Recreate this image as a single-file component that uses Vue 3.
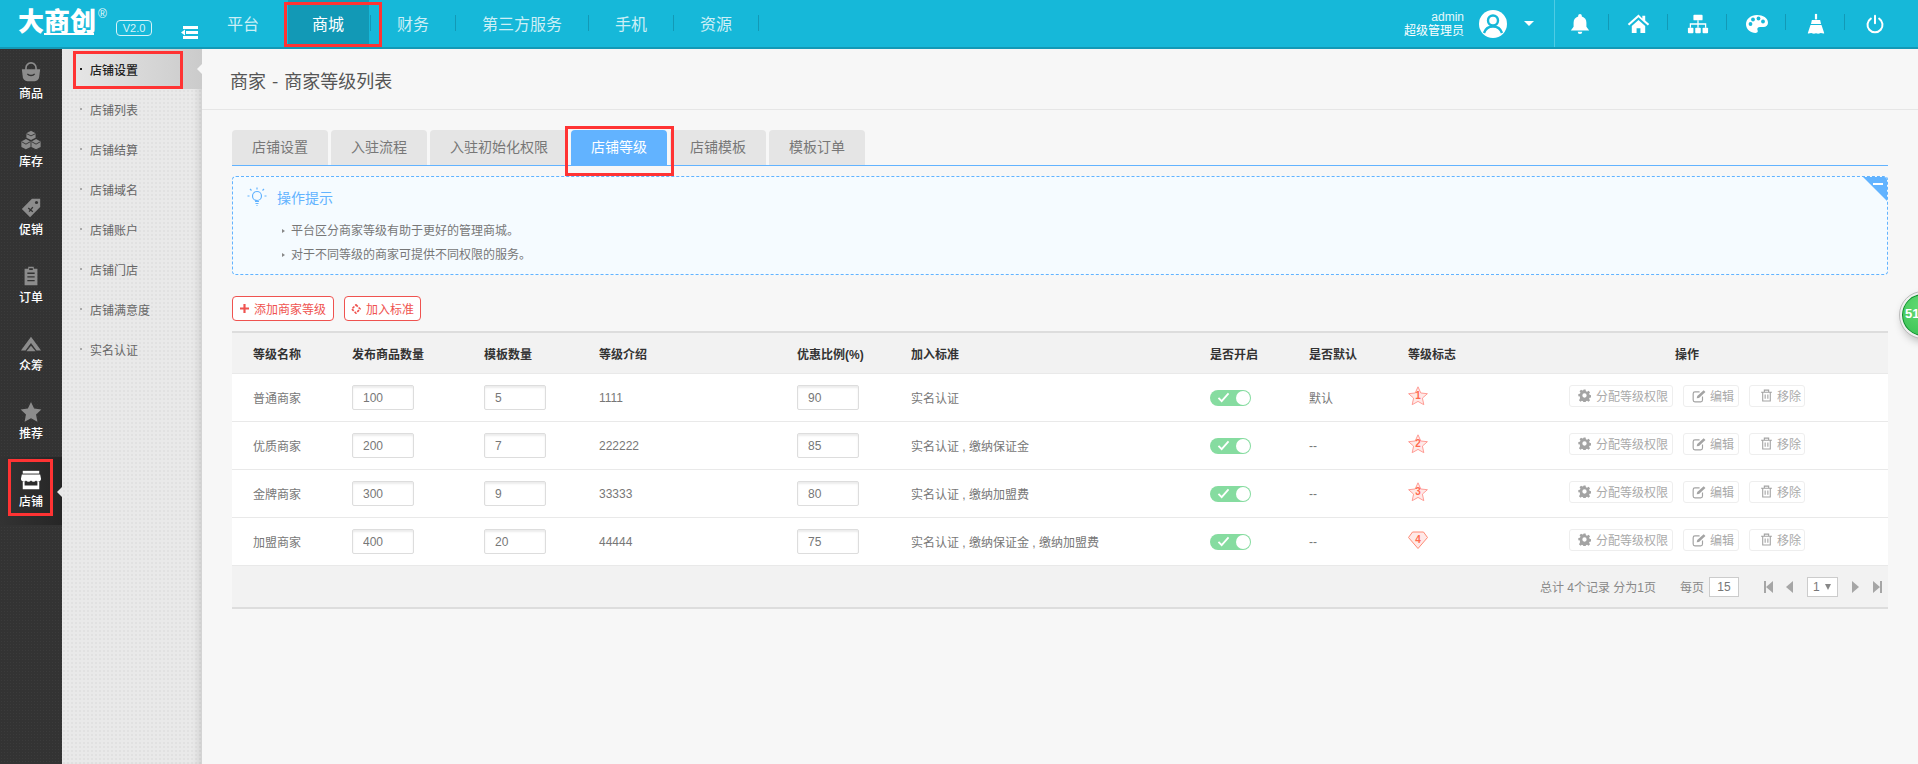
<template>
  <div class="page">
    <!-- Top bar -->
    <header class="topbar">
      <div class="logo">
        <span class="logo-text">大商创</span>
        <span class="logo-line"></span>
        <span class="logo-reg">®</span>
        <span class="logo-ver">V2.0</span>
        <svg class="menu-toggle" viewBox="0 0 17 13" width="17" height="13">
          <path d="M0 6.5 4 3.5v6z" fill="#fff" />
          <path d="M2 0h15v3H2zM5 5h12v3H5zM2 10h15v3H2z" fill="#fff" />
        </svg>
      </div>
      <nav class="topnav">
        <a v-for="item in topNav" :key="item" class="topnav-item" :class="{ active: item === '商城' }">{{ item }}</a>
      </nav>
      <div class="topbar-right">
        <div class="user">
          <div class="user-name">admin</div>
          <div class="user-role">超级管理员</div>
        </div>
        <svg class="avatar" viewBox="0 0 28 28" width="28" height="28">
          <circle cx="14" cy="14" r="14" fill="#fff" />
          <circle cx="14" cy="10.5" r="5" fill="none" stroke="#16b8d9" stroke-width="2.4" />
          <path d="M5 23c1.5-4.5 5-6.5 9-6.5s7.5 2 9 6.5" fill="none" stroke="#16b8d9" stroke-width="2.4" />
        </svg>
        <span class="caret"></span>
        <div class="tools">
          <div class="tool first">
            <svg viewBox="0 0 24 24" width="22" height="22" fill="#fff">
              <path d="M12 1a2 2 0 0 1 2 2v.8A7 7 0 0 1 19 10.5V15l3 4H2l3-4v-4.5a7 7 0 0 1 5-6.7V3a2 2 0 0 1 2-2z" />
              <path d="M9.5 20.5h5a2.5 2.5 0 0 1-5 0z" />
            </svg>
          </div>
          <div class="tool">
            <svg viewBox="0 0 24 24" width="23" height="23" fill="#fff">
              <path d="M12 2.5 .8 12.5l1.500 1.700L12 5.600l9.700 8.600 1.500-1.700-4.200-3.700V4h-3v2.900z" />
              <path d="M5 14.500 12 8.300l7 6.200V22h-5v-5h-4v5H5z" />
            </svg>
          </div>
          <div class="tool">
            <svg viewBox="0 0 24 24" width="22" height="22" fill="#fff">
              <rect x="7" y="2" width="10" height="6" rx="1" />
              <rect x="1" y="16" width="6" height="6" rx="1" />
              <rect x="9" y="16" width="6" height="6" rx="1" />
              <rect x="17" y="16" width="6" height="6" rx="1" />
              <path d="M11.3 8h1.400v3.300H21V16h-1.400v-3.300h-6.900V16h-1.400v-3.300H4.400V16H3v-4.700h8.300z" />
            </svg>
          </div>
          <div class="tool">
            <svg viewBox="0 0 24 24" width="24" height="24">
              <path d="M12 3C5.800 3 1 7 1 12.300 1 17.500 5.500 21 10.500 21c2.500 0 2.500-1.700 2-2.900-.7-1.600.3-3.100 2.500-3.100h3.500c2.700 0 4.500-1.800 4.500-4.300C23 6 18 3 12 3z" fill="#fff" />
              <circle cx="5.500" cy="12" r="1.900" fill="#16b8d9" />
              <circle cx="8" cy="7.500" r="1.900" fill="#16b8d9" />
              <circle cx="13.500" cy="6.500" r="1.900" fill="#16b8d9" />
              <circle cx="18" cy="9.500" r="1.900" fill="#16b8d9" />
            </svg>
          </div>
          <div class="tool">
            <svg viewBox="0 0 24 24" width="22" height="22" fill="#fff">
              <path d="M10.800 1h2.400v6h-2.400z" />
              <path d="M7.500 7.500h9l1 4.500h-11z" />
              <path d="M6 13h12l3 9c-1.500.8-3-.6-4.500 0-1.500.7-3 .7-4.500 0-1.500.7-3 .7-4.500 0-1.500-.6-3 .8-4.500 0z" />
            </svg>
          </div>
          <div class="tool last">
            <svg viewBox="0 0 24 24" width="20" height="20" fill="none" stroke="#fff" stroke-width="2.4" stroke-linecap="round">
              <path d="M7 5.500a9 9 0 1 0 10 0" />
              <path d="M12 2v9" />
            </svg>
          </div>
        </div>
      </div>
    </header>

    <div class="layout">
      <!-- Main module bar -->
      <aside class="sidebar">
        <div v-for="item in sideNav" :key="item.name" class="side-item" :class="{ active: item.name === '店铺' }">
          <svg class="side-icon" viewBox="0 0 24 24" width="22" height="22" v-html="item.icon"></svg>
          <span>{{ item.name }}</span>
        </div>
      </aside>

      <!-- Sub menu -->
      <aside class="submenu">
        <div v-for="(item, i) in subNav" :key="item" class="sub-item" :class="{ active: i === 0 }">
          <i class="sub-dot"></i>{{ item }}
        </div>
      </aside>

      <!-- Content -->
      <main class="content">
        <div class="page-title">商家 - 商家等级列表</div>
        <div class="content-body">
          <div class="tabs">
            <div v-for="tab in tabs" :key="tab" class="tab" :class="{ active: tab === '店铺等级' }">{{ tab }}</div>
          </div>

          <div class="tips">
            <div class="tips-head">
              <svg viewBox="0 0 20 20" width="20" height="20" fill="none" stroke="#62b3ff" stroke-width="1.2">
                <circle cx="10" cy="9" r="4.500" />
                <path d="M8 14.500h4M8.500 16.500h3M9.500 18.500h1M10 .5v2M2.500 9h-2M19.500 9h-2M4.500 3.500 3 2M15.500 3.500 17 2" />
              </svg>
              <span>操作提示</span>
            </div>
            <ul class="tips-list">
              <li>平台区分商家等级有助于更好的管理商城。</li>
              <li>对于不同等级的商家可提供不同权限的服务。</li>
            </ul>
            <div class="tips-corner"><i></i></div>
          </div>

          <div class="toolbar">
            <button class="red-btn">
              <svg viewBox="0 0 10 10" width="9" height="9" fill="#ef5350"><path d="M3.800 0h2.400v3.800H10v2.400H6.200V10H3.800V6.200H0V3.800h3.800z" /></svg>
              添加商家等级
            </button>
            <button class="red-btn second">
              <svg viewBox="0 0 12 12" width="10" height="10" fill="none" stroke="#ef5350" stroke-width="2"><path d="M6 1 11 6 6 11 1 6z" stroke-dasharray="3 1.500" /></svg>
              加入标准
            </button>
          </div>

          <table class="grade-table">
            <colgroup>
              <col v-for="w in colWidths" :key="w.id" :style="{ width: w.px + 'px' }" />
            </colgroup>
            <thead>
              <tr>
                <th class="first">等级名称</th>
                <th>发布商品数量</th>
                <th>模板数量</th>
                <th>等级介绍</th>
                <th>优惠比例(%)</th>
                <th>加入标准</th>
                <th>是否开启</th>
                <th>是否默认</th>
                <th>等级标志</th>
                <th class="center">操作</th>
              </tr>
            </thead>
            <tbody>
              <tr v-for="row in grades" :key="row.name">
                <td class="first">{{ row.name }}</td>
                <td><input class="num" :value="row.goods" /></td>
                <td><input class="num" :value="row.tpl" /></td>
                <td>{{ row.intro }}</td>
                <td><input class="num" :value="row.rate" /></td>
                <td>{{ row.standard }}</td>
                <td>
                  <div class="switch">
                    <svg viewBox="0 0 14 12" width="13" height="11" fill="none" stroke="#fff" stroke-width="2"><path d="M1.500 6.500 5 10l7.500-8.500" /></svg>
                    <i></i>
                  </div>
                </td>
                <td>{{ row.isDefault }}</td>
                <td>
                  <svg class="badge" viewBox="0 0 20 20" width="20" height="20">
                    <path v-if="row.level < 4" d="M10 .8l2.800 6.200 6.600.7-5 4.400 1.400 6.600L10 15.400l-5.800 3.300 1.400-6.600-5-4.400 6.600-.7z" fill="#ffe9e7" stroke="#ff9d96" />
                    <path v-else d="M4.500 2h11l4 5.500L10 18.500.5 7.500z" fill="#ffe9e7" stroke="#ff8a75" />
                    <text x="10" y="13" text-anchor="middle" class="badge-num">{{ row.level }}</text>
                  </svg>
                </td>
                <td class="center">
                  <div class="actions">
                    <a class="act act-wide">
                      <svg viewBox="0 0 24 24" width="13" height="13"><path fill="#a3a3a3" fill-rule="evenodd" d="M10 1h4l.6 3 2.200.9 2.600-1.700 2.800 2.800-1.700 2.600.9 2.200 3 .6v4l-3 .6-.9 2.200 1.700 2.600-2.800 2.800-2.600-1.700-2.200.9-.6 3h-4l-.6-3-2.200-.9-2.600 1.700-2.800-2.800 1.700-2.600L3.600 14l-3-.6v-4l3-.6.9-2.200L2.800 4l2.800-2.800 2.600 1.700 2.200-.9zM12 8a4 4 0 1 0 0 8 4 4 0 0 0 0-8z" /></svg>
                      分配等级权限
                    </a>
                    <a class="act">
                      <svg viewBox="0 0 24 24" width="14" height="14" fill="none" stroke="#a3a3a3" stroke-width="2"><path d="M18 13v6a3 3 0 0 1-3 3H5a3 3 0 0 1-3-3V8a3 3 0 0 1 3-3h8" /><path d="M9 12 20 2l3 3-11 10.500-4 .5z" fill="#a3a3a3" stroke="none" /></svg>
                      编辑
                    </a>
                    <a class="act act-del">
                      <svg viewBox="0 0 24 24" width="13" height="13" fill="none" stroke="#a3a3a3" stroke-width="2"><path d="M2 6h20M8 6V2h8v4M5 6v16h14V6M9.500 10v8M14.500 10v8" /></svg>
                      移除
                    </a>
                  </div>
                </td>
              </tr>
            </tbody>
          </table>

          <div class="pager">
            <span class="pager-total">总计 4个记录 分为1页</span>
            <span class="pager-size">每页</span>
            <input class="pager-input" value="15" />
            <svg class="pager-first" viewBox="0 0 9 12" width="9" height="12" fill="#a6a6a6"><path d="M0 0h2v12H0zM9 0v12L2 6z" /></svg>
            <svg class="pager-prev" viewBox="0 0 7 12" width="7" height="12" fill="#a6a6a6"><path d="M7 0v12L0 6z" /></svg>
            <div class="pager-select">1<i></i></div>
            <svg class="pager-next" viewBox="0 0 7 12" width="7" height="12" fill="#a6a6a6"><path d="M0 0v12l7-6z" /></svg>
            <svg class="pager-last" viewBox="0 0 9 12" width="9" height="12" fill="#a6a6a6"><path d="M7 0h2v12H7zM0 0v12l7-6z" /></svg>
          </div>
        </div>
      </main>
    </div>

    <!-- Floating chat ball -->
    <div class="ball">51</div>

    <!-- Red review marks drawn over the page -->
    <div class="mark mark-nav"></div>
    <div class="mark mark-sub"></div>
    <div class="mark mark-tab"></div>
    <div class="mark mark-side"></div>
  </div>
</template>

<script setup>
const topNav = ['平台', '商城', '财务', '第三方服务', '手机', '资源']

const sideNav = [
  {
    name: '商品',
    icon: '<path d="M6.500 10V7.500a5.500 5.500 0 0 1 11 0V10" fill="none" stroke="currentColor" stroke-width="1.800"/><path d="M2 9h20l-1 8a5 5 0 0 1-5 5H8a5 5 0 0 1-5-5z" fill="currentColor"/><path d="M8 14c2 2.500 6 2.500 8 0" fill="none" stroke="#333" stroke-width="1.500"/>'
  },
  {
    name: '库存',
    icon: '<path d="M12 2l5 2.500v5L12 12 7 9.500v-5z" fill="currentColor"/><path d="M6.500 11l5 2.500v6l-5 2.500-5-2.500v-6z" fill="currentColor"/><path d="M17.500 11l5 2.500v6l-5 2.500-5-2.500v-6z" fill="currentColor"/><path d="M7 5l5 2.500L17 5M2 14l4.500 2.500L11 14M13 14l4.500 2.500L22 14" fill="none" stroke="#333"/>'
  },
  {
    name: '促销',
    icon: '<path d="M13 2h9v9L11 22 2 13z" fill="currentColor"/><circle cx="18" cy="6" r="1.700" fill="#333"/><path d="M9 12l5 4M14 11l-4 5" stroke="#333" stroke-width="1.500"/>'
  },
  {
    name: '订单',
    icon: '<path d="M9 2h6v2h4v18H5V4h4z" fill="currentColor"/><path d="M8 9h8M8 13h8M8 17h8" stroke="#333" stroke-width="1.500"/><path d="M10 3.500h4v2h-4z" fill="#333"/>'
  },
  {
    name: '众筹',
    icon: '<path d="M12 4 23 19h-5l-6-8-6 8H1z" fill="currentColor"/><path d="M12 14l5 6H7z" fill="currentColor"/>'
  },
  {
    name: '推荐',
    icon: '<path d="M12 1l3.400 7.300 7.900 1-5.800 5.400 1.500 7.900L12 18.700l-7 3.900 1.500-7.900L.7 9.300l7.900-1z" fill="currentColor"/>'
  },
  {
    name: '店铺',
    icon: '<path d="M3 2h18v3H3z" fill="currentColor"/><path d="M2 6h20l1 5a3 3 0 0 1-5.500 1.500 3.500 3.500 0 0 1-5.500 0 3.500 3.500 0 0 1-5.500 0A3 3 0 0 1 1 11z" fill="currentColor"/><path d="M3 14v8h18v-8h-2v4H5v-4z" fill="currentColor"/>'
  }
]

const subNav = ['店铺设置', '店铺列表', '店铺结算', '店铺域名', '店铺账户', '店铺门店', '店铺满意度', '实名认证']

const tabs = ['店铺设置', '入驻流程', '入驻初始化权限', '店铺等级', '店铺模板', '模板订单']

const colWidths = [120, 132, 115, 198, 114, 299, 99, 99, 78, 402].map((px, id) => ({ id, px }))

const grades = [
  { name: '普通商家', goods: 100, tpl: 5, intro: '1111', rate: 90, standard: '实名认证', isDefault: '默认', level: 1 },
  { name: '优质商家', goods: 200, tpl: 7, intro: '222222', rate: 85, standard: '实名认证 , 缴纳保证金', isDefault: '--', level: 2 },
  { name: '金牌商家', goods: 300, tpl: 9, intro: '33333', rate: 80, standard: '实名认证 , 缴纳加盟费', isDefault: '--', level: 3 },
  { name: '加盟商家', goods: 400, tpl: 20, intro: '44444', rate: 75, standard: '实名认证 , 缴纳保证金 , 缴纳加盟费', isDefault: '--', level: 4 }
]
</script>

<style>
html, body {
  margin: 0;
  height: 100%;
  overflow: hidden;
  background: #f7f7f7;
}
</style>

<style scoped>
.page {
  position: relative;
  width: 100%;
  height: 100vh;
  min-height: 764px;
  overflow: hidden;
  display: flex;
  flex-direction: column;
  font-family: "Liberation Sans", "Noto Sans CJK SC", sans-serif;
  font-size: 12px;
  color: #777;
  background: #f7f7f7;
}

/* Top bar */
.topbar {
  flex: none;
  height: 47px;
  display: flex;
  align-items: stretch;
  background: #16b8d9;
  border-bottom: 2px solid #1299b6;
}

.logo {
  position: relative;
  width: 201px;
  flex: none;
}

.logo-text {
  position: absolute;
  left: 18px;
  top: 1px;
  font-family: "Noto Sans CJK SC", sans-serif;
  font-weight: 900;
  font-size: 26px;
  line-height: 38px;
  color: #fff;
}

.logo-line {
  position: absolute;
  left: 44px;
  top: 33px;
  width: 50px;
  height: 2px;
  background: #fff;
}

.logo-reg {
  position: absolute;
  left: 98px;
  top: 7px;
  font-size: 12px;
  color: #e6f8fb;
}

.logo-ver {
  position: absolute;
  left: 116px;
  top: 20px;
  width: 34px;
  height: 14px;
  line-height: 14px;
  border: 1px solid #d8f3f8;
  border-radius: 4px;
  text-align: center;
  font-size: 11px;
  color: #d8f3f8;
}

.menu-toggle {
  position: absolute;
  left: 181px;
  top: 26px;
}

.topnav {
  display: flex;
}

.topnav-item {
  position: relative;
  padding: 0 26px;
  line-height: 47px;
  font-size: 16px;
  color: #cdeff6;
  font-family: "Noto Sans CJK SC", sans-serif;
  border-right: 1px solid transparent;
}

.topnav-item::after {
  content: "";
  position: absolute;
  right: -1px;
  top: 15px;
  height: 16px;
  width: 1px;
  background: #1299b6;
}

.topnav-item.active {
  color: #fff;
  background: linear-gradient(#1299b6, #1299b6) no-repeat center / calc(100% - 3px) 100%;
}

.topbar-right {
  margin-left: auto;
  display: flex;
  align-items: center;
}

.user {
  text-align: right;
  line-height: 14px;
  color: #e6f8fb;
  margin-right: 15px;
}

.user-role {
  font-size: 12px;
  color: #fff;
}

.avatar {
  flex: none;
}

.caret {
  margin-left: 17px;
  margin-right: 20px;
  border-left: 5px solid transparent;
  border-right: 5px solid transparent;
  border-top: 5px solid #fff;
}

.tools {
  display: flex;
  align-self: stretch;
  margin-right: 14px;
  border-left: 1px solid #4fcbe4;
}

.tool {
  position: relative;
  width: 59px;
  display: flex;
  align-items: center;
  justify-content: center;
}

.tool.first {
  width: 54px;
  box-sizing: border-box;
  padding-right: 5px;
}

.tool::after {
  content: "";
  position: absolute;
  right: 0;
  top: 14px;
  height: 16px;
  width: 1px;
  background: #1299b6;
}

.tool.last::after {
  display: none;
}

/* Layout */
.layout {
  flex: 1;
  display: flex;
  min-height: 0;
}

.sidebar {
  width: 62px;
  flex: none;
  background-color: #333;
  background-image: radial-gradient(#3b3b3b 1px, transparent 1px);
  background-size: 3px 3px;
}

.side-item {
  position: relative;
  height: 68px;
  display: flex;
  flex-direction: column;
  align-items: center;
  padding-top: 12px;
  box-sizing: border-box;
  color: #fff;
  font-family: "Noto Sans CJK SC", sans-serif;
  font-weight: 500;
  line-height: 19px;
}

.side-icon {
  color: #8c8c8c;
}

.side-item.active {
  background: linear-gradient(90deg, #333, #262626);
}

.side-item.active .side-icon {
  color: #fff;
}

.side-item.active::after {
  content: "";
  position: absolute;
  right: 0;
  top: 30px;
  border-top: 5px solid transparent;
  border-bottom: 5px solid transparent;
  border-right: 5px solid #e8e8e8;
}

.submenu {
  width: 140px;
  flex: none;
  background-color: #e9e9e9;
  background-image: radial-gradient(#e1e1e1 1px, transparent 1px);
  background-size: 4px 4px;
  box-shadow: inset -8px 0 8px -6px rgba(0, 0, 0, 0.14);
}

.sub-item {
  position: relative;
  height: 40px;
  line-height: 41px;
  padding-left: 28px;
  color: #666;
  font-family: "Noto Sans CJK SC", sans-serif;
}

.sub-dot {
  display: inline-block;
  width: 2px;
  height: 2px;
  background: #aaa;
  position: absolute;
  left: 18px;
  top: 19px;
}

.sub-item.active {
  color: #222;
  font-weight: 500;
  background: linear-gradient(90deg, #e8e8e8, #cbcbcb);
}

.sub-item.active .sub-dot {
  background: #222;
}

.sub-item.active::after {
  content: "";
  position: absolute;
  right: 0;
  top: 15px;
  border-top: 5px solid transparent;
  border-bottom: 5px solid transparent;
  border-right: 5px solid #f7f7f7;
}

/* Content */
.content {
  flex: 1;
  min-width: 0;
}

.page-title {
  height: 60px;
  line-height: 62px;
  padding-left: 28px;
  font-size: 18px;
  word-spacing: 2px;
  color: #555;
  font-family: "Noto Sans CJK SC", sans-serif;
  border-bottom: 1px solid #e6e6e6;
}

.content-body {
  padding: 20px 30px 0;
}

.tabs {
  display: flex;
  gap: 3px;
  height: 35px;
  border-bottom: 1px solid #62b3ff;
}

.tab {
  width: 96px;
  height: 35px;
  line-height: 35px;
  text-align: center;
  font-size: 14px;
  color: #777;
  background: #e5e5e5;
  border-radius: 4px 4px 0 0;
}

.tab:nth-child(3) {
  width: 138px;
}

.tab.active {
  background: #62b3ff;
  color: #fff;
}

.tips {
  position: relative;
  height: 99px;
  box-sizing: border-box;
  margin-top: 10px;
  border: 1px dashed #62b3ff;
  border-radius: 4px;
  background: #f5fbff;
  padding: 10px 0 0 14px;
  overflow: hidden;
}

.tips-head {
  display: flex;
  align-items: center;
  gap: 10px;
  font-size: 14px;
  color: #62b3ff;
}

.tips-list {
  list-style: none;
  margin: 12px 0 0;
  padding: 0 0 0 44px;
}

.tips-list li {
  position: relative;
  line-height: 24px;
  color: #777;
}

.tips-list li::before {
  content: "";
  position: absolute;
  left: -9px;
  top: 10px;
  border-top: 2.5px solid transparent;
  border-bottom: 2.5px solid transparent;
  border-left: 3px solid #888;
}

.tips-corner {
  position: absolute;
  right: -1px;
  top: -1px;
  width: 0;
  height: 0;
  border-top: 26px solid #62b3ff;
  border-left: 26px solid transparent;
}

.tips-corner i {
  position: absolute;
  left: -15px;
  top: -19px;
  width: 10px;
  height: 2px;
  background: #fff;
}

.toolbar {
  display: flex;
  gap: 10px;
  margin: 21px 0 10px;
}

.red-btn {
  height: 25px;
  box-sizing: border-box;
  width: 102px;
  padding: 0 0 0 7px;
  display: flex;
  align-items: center;
  gap: 5px;
  border: 1px solid #ef5350;
  border-radius: 4px;
  background: #fff;
  color: #ef5350;
  font: inherit;
}

.red-btn.second {
  width: 77px;
  padding-left: 6px;
}

.grade-table {
  width: 100%;
  table-layout: fixed;
  border-collapse: collapse;
  border-top: 2px solid #ddd;
  background: #fff;
}

.grade-table th {
  height: 40px;
  padding: 0;
  text-align: left;
  background: #f2f2f2;
  color: #333;
  font-weight: 700;
  font-size: 12px;
  border-bottom: 1px solid #e9e9e9;
}

.grade-table td {
  height: 47px;
  padding: 0;
  text-align: left;
  border-bottom: 1px solid #e9e9e9;
  color: #777;
}

.grade-table .first {
  padding-left: 21px;
}

.grade-table .center {
  text-align: center;
}

.num {
  display: block;
  width: 62px;
  height: 25px;
  box-sizing: border-box;
  padding: 0 0 0 10px;
  border: 1px solid #ddd;
  border-radius: 2px;
  box-shadow: inset 0 2px 2px rgba(0, 0, 0, 0.08);
  font: inherit;
  color: #777;
  outline: none;
}

.switch {
  width: 41px;
  height: 16px;
  border-radius: 8px;
  background: #86dca0;
  display: flex;
  align-items: center;
  justify-content: space-between;
  padding: 0 1px 0 7px;
  box-sizing: border-box;
}

.switch i {
  width: 14px;
  height: 14px;
  border-radius: 50%;
  background: #fff;
}

.badge {
  display: block;
  margin-top: -3px;
}

.badge-num {
  font-size: 10px;
  font-weight: 700;
  fill: #ff6a50;
}

.actions {
  display: flex;
  justify-content: center;
  gap: 10px;
  margin-bottom: 4px;
}

.act {
  width: 56px;
  height: 22px;
  box-sizing: border-box;
  padding-left: 8px;
  display: flex;
  align-items: center;
  gap: 4px;
  border: 1px solid #eee;
  border-radius: 3px;
  background: #fff;
  color: #aaa;
}

.act-wide {
  width: 104px;
  gap: 5px;
}

.act-del {
  padding-left: 10px;
}

.pager {
  height: 41px;
  display: flex;
  align-items: center;
  background: #f2f2f2;
  border-bottom: 2px solid #ddd;
  color: #888;
}

.pager-total {
  margin-left: 1308px;
}

.pager-size {
  margin-left: 24px;
}

.pager-input {
  width: 30px;
  height: 20px;
  box-sizing: border-box;
  margin-left: 5px;
  border: 1px solid #ccc;
  background: #fff;
  text-align: center;
  font: inherit;
  color: #777;
  padding: 0;
  outline: none;
}

.pager-first {
  margin-left: 25px;
}

.pager-prev {
  margin-left: 13px;
}

.pager-select {
  position: relative;
  width: 31px;
  height: 20px;
  box-sizing: border-box;
  margin-left: 14px;
  padding-left: 5px;
  line-height: 18px;
  border: 1px solid #ccc;
  background: #fff;
  color: #777;
}

.pager-select i {
  position: absolute;
  right: 6px;
  top: 6px;
  border-left: 3.5px solid transparent;
  border-right: 3.5px solid transparent;
  border-top: 6px solid #888;
}

.pager-next {
  margin-left: 14px;
}

.pager-last {
  margin-left: 14px;
}

/* Floating ball */
.ball {
  position: absolute;
  left: 1900px;
  top: 292px;
  width: 46px;
  height: 46px;
  box-sizing: border-box;
  border-radius: 50%;
  border: 2px solid #f0f0f0;
  outline: 1px solid #bbb;
  background: radial-gradient(circle at 50% 30%, #66dc75, #35bf50);
  box-shadow: 0 0 0 1px #0f8a2f inset, 2px 4px 8px rgba(0, 0, 0, 0.25);
  padding-left: 3px;
  line-height: 40px;
  color: #fff;
  font-size: 13px;
  font-weight: 700;
}

/* Red marks */
.mark {
  position: absolute;
  box-sizing: border-box;
  border: 3px solid #ff3333;
  pointer-events: none;
}

.mark-nav {
  left: 284px;
  top: 2px;
  width: 98px;
  height: 45px;
}

.mark-sub {
  left: 73px;
  top: 51px;
  width: 110px;
  height: 38px;
}

.mark-tab {
  left: 565px;
  top: 126px;
  width: 109px;
  height: 50px;
}

.mark-side {
  left: 8px;
  top: 459px;
  width: 45px;
  height: 57px;
}
</style>
